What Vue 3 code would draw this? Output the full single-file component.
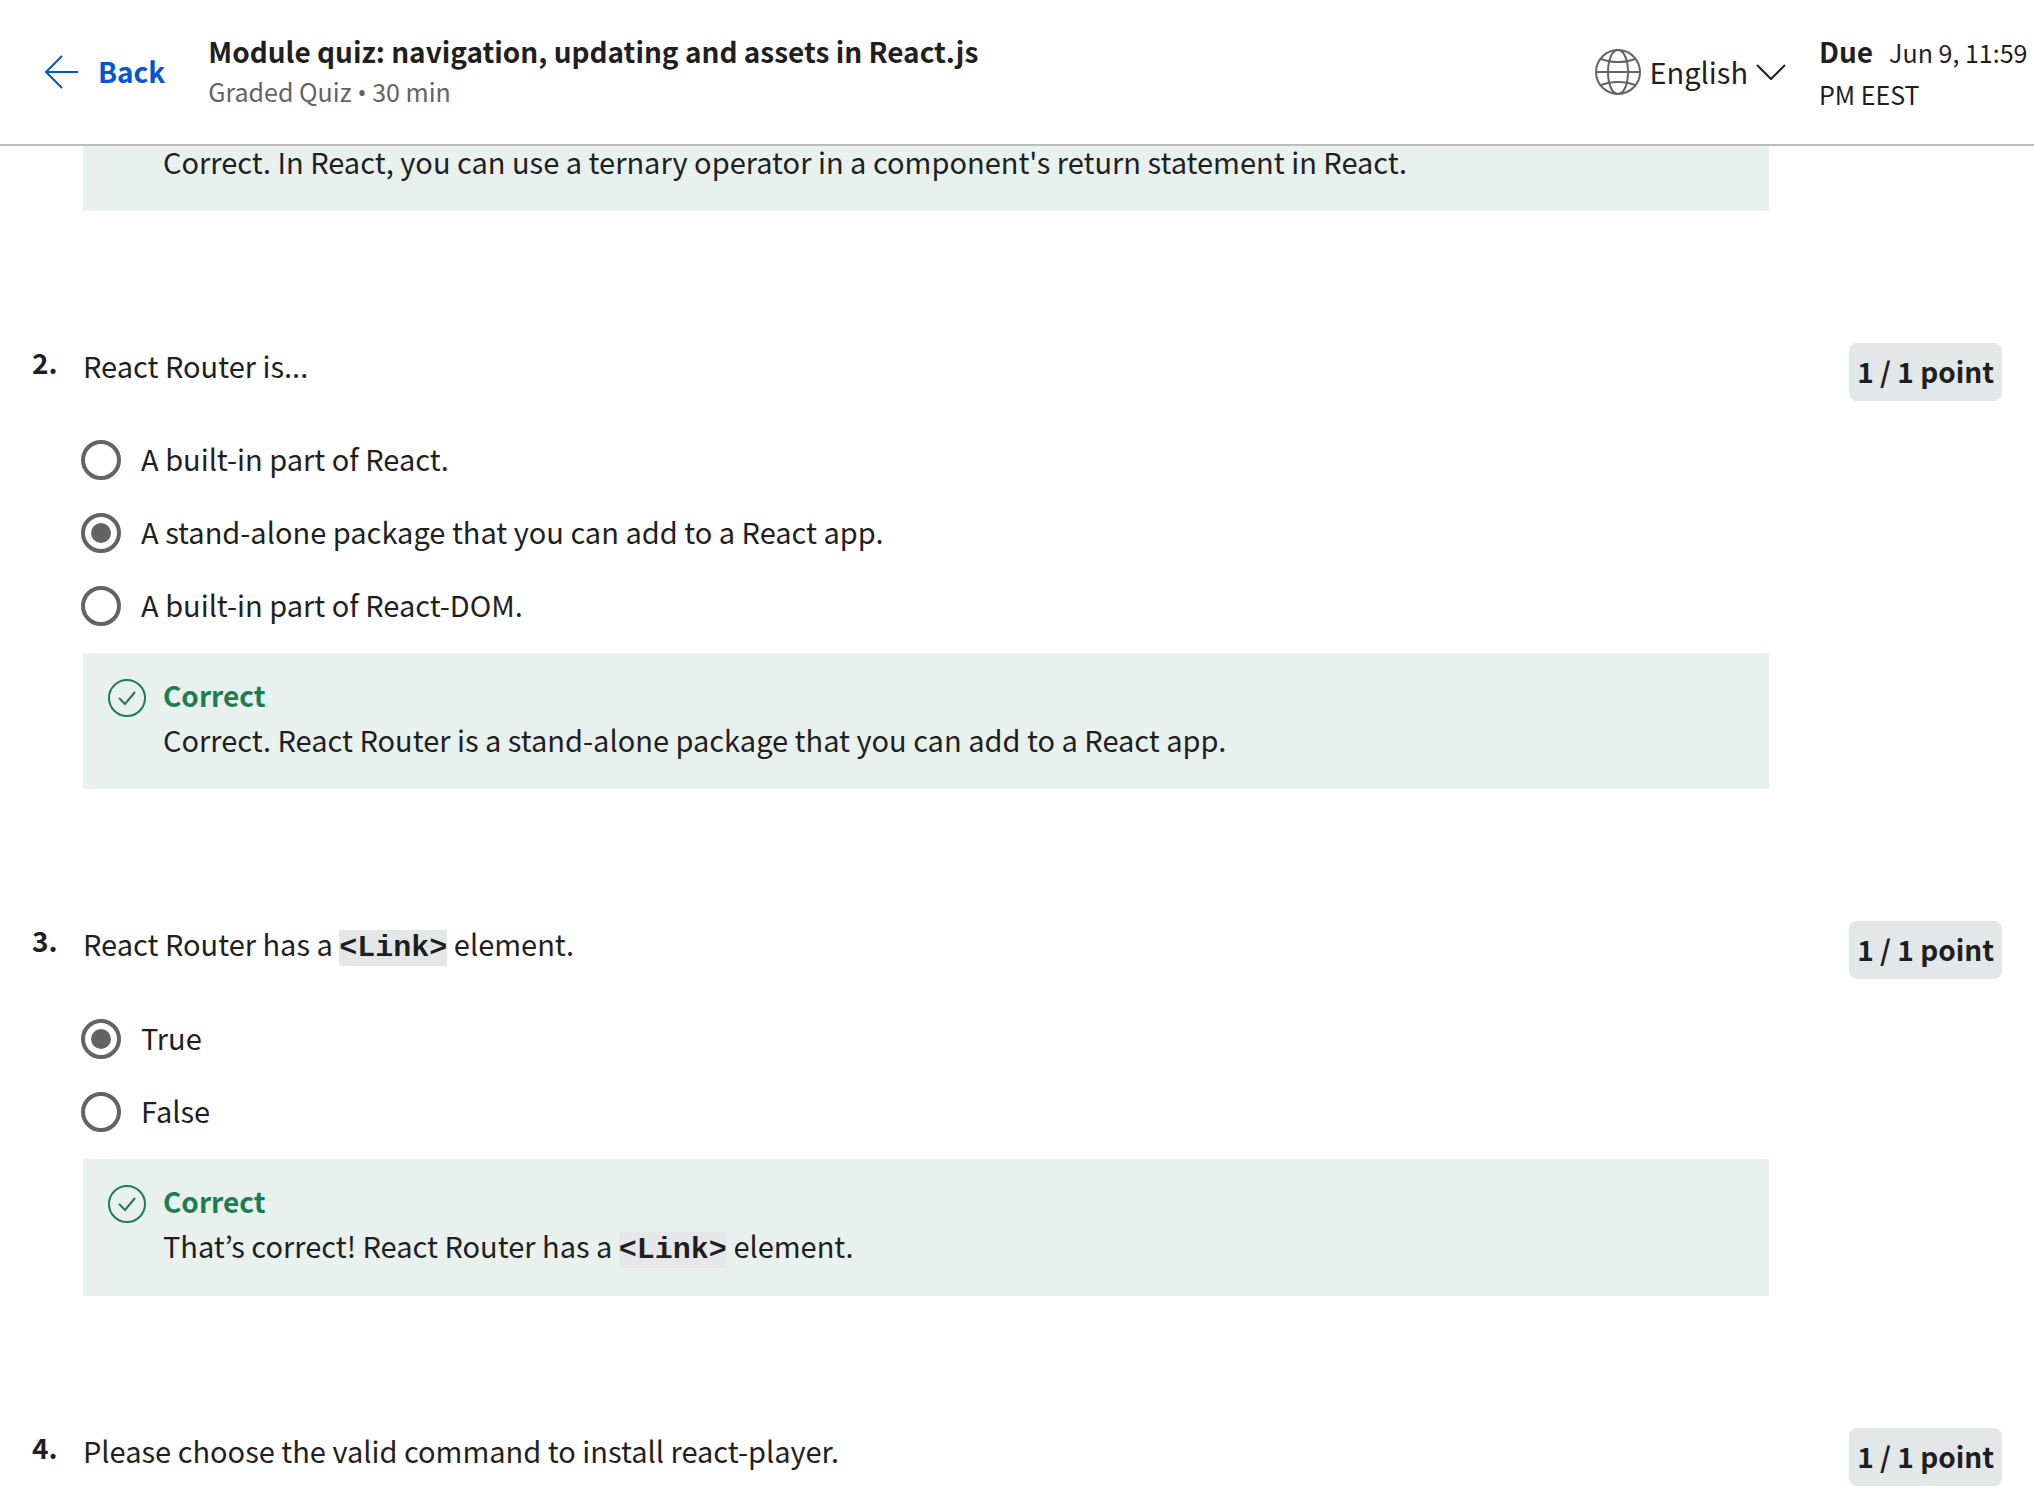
<script setup>
import { ref } from 'vue'

const questions = ref([
  {
    number: 2,
    text: [{ value: 'React Router is...' }],
    options: [
      'A built-in part of React.',
      'A stand-alone package that you can add to a React app.',
      'A built-in part of React-DOM.'
    ],
    selected: 1,
    feedback: [{ value: 'Correct. React Router is a stand-alone package that you can add to a React app.' }]
  },
  {
    number: 3,
    text: [{ value: 'React Router has a ' }, { value: '<Link>', code: true }, { value: ' element.' }],
    options: ['True', 'False'],
    selected: 0,
    feedback: [
      { value: 'That’s correct! React Router has a ' },
      { value: '<Link>', code: true },
      { value: ' element.' }
    ]
  },
  {
    number: 4,
    text: [{ value: 'Please choose the valid command to install react-player.' }],
    options: [],
    selected: null,
    feedback: null
  }
])
</script>

<template>
  <div class="page">
    <header class="topbar">
      <a class="back" href="#">
        <svg width="34" height="34" viewBox="0 0 34 34" fill="none" stroke="currentColor" stroke-width="2" aria-hidden="true">
          <path d="M34 17H2M18 1L2 17l16 16" />
        </svg>
        <span>Back</span>
      </a>
      <div class="heading">
        <h1>Module quiz: navigation, updating and assets in React.js</h1>
        <p>Graded Quiz <span class="dot">•</span> 30 min</p>
      </div>
      <button class="language" type="button">
        <svg width="46" height="46" viewBox="0 0 46 46" fill="none" stroke="#636363" stroke-width="2" aria-hidden="true">
          <circle cx="23" cy="23" r="22" />
          <path d="M1 23h44M23 1c-6 0-10 10-10 22s4 22 10 22 10-10 10-22S29 1 23 1zM6 10c5 2 11 3 17 3s12-1 17-3M6 36c5-2 11-3 17-3s12 1 17 3" />
        </svg>
        <span>English</span>
        <svg width="30" height="16" viewBox="0 0 30 16" fill="none" stroke="currentColor" stroke-width="2" aria-hidden="true">
          <path d="M1 1l14 14L29 1" />
        </svg>
      </button>
      <p class="due"><strong>Due</strong><span>Jun 9, 11:59</span> <span>PM EEST</span></p>
    </header>

    <main>
      <section class="question previous">
        <div class="feedback">
          <p>Correct. In React, you can use a ternary operator in a component's return statement in React.</p>
        </div>
      </section>

      <section v-for="q in questions" :key="q.number" class="question">
        <h2 class="number">{{ q.number }}.</h2>
        <p :id="`q${q.number}`" class="prompt">
          <template v-for="(part, i) in q.text" :key="i"><code v-if="part.code">{{ part.value }}</code><template v-else>{{ part.value }}</template></template>
        </p>
        <span class="points">1 / 1 point</span>
        <div v-if="q.options.length" class="options" role="radiogroup" :aria-labelledby="`q${q.number}`">
          <label v-for="(option, i) in q.options" :key="i" class="option">
            <input v-model="q.selected" type="radio" :name="`question-${q.number}`" :value="i">
            <span>{{ option }}</span>
          </label>
        </div>
        <div v-if="q.feedback" class="feedback">
          <svg width="38" height="38" viewBox="0 0 38 38" fill="none" stroke="#1d7c50" stroke-width="2" aria-hidden="true">
            <circle cx="19" cy="19" r="18" />
            <path d="M11 19l6 6 10-12" />
          </svg>
          <h3>Correct</h3>
          <p>
            <template v-for="(part, i) in q.feedback" :key="i"><code v-if="part.code">{{ part.value }}</code><template v-else>{{ part.value }}</template></template>
          </p>
        </div>
      </section>
    </main>
  </div>
</template>

<style>
body {
  margin: 0;
  background: #fff;
}
</style>

<style scoped>
.page {
  font-family: "Noto Sans CJK KR", "Open Sans", sans-serif;
  font-size: 29px;
  line-height: 44px;
  color: #1f1f1f;
}

h1,
h2,
h3,
p {
  margin: 0;
  font-size: inherit;
}

h1,
h2,
h3,
.back,
.points,
.due strong {
  font-size: 28px;
  font-weight: 600;
}

.topbar {
  position: sticky;
  top: 0;
  z-index: 1;
  box-sizing: border-box;
  display: flex;
  align-items: center;
  height: 146px;
  padding-left: 44px;
  border-bottom: 2px solid #bdbdbd;
  background: #fff;
}

.back {
  display: flex;
  align-items: center;
  gap: 20px;
  margin-right: 43px;
  color: #0056d2;
  text-decoration: none;
}

.back span,
.language span,
.heading {
  padding-bottom: 2px;
}

.heading {
  flex: 1;
}

.heading h1 {
  line-height: 40px;
}

.heading p {
  font-size: 25px;
  line-height: 40px;
  color: #636363;
}

.dot {
  font-family: "Open Sans", sans-serif;
  line-height: 1;
}

.language {
  display: flex;
  align-items: center;
  gap: 8px;
  margin-right: 33px;
  padding: 0;
  border: 0;
  background: none;
  color: inherit;
  font: inherit;
}

.due {
  width: 215px;
  font-size: 25px;
  line-height: 42px;
}

.due strong {
  margin-right: 16px;
}

main {
  padding: 0 32px 28px;
}

.question {
  display: grid;
  grid-template-columns: 51px 1fr 233px;
  margin-bottom: 132px;
}

.question:last-child {
  margin-bottom: 0;
}

.number {
  line-height: 38px;
}

.prompt {
  grid-column: 2;
}

.points {
  justify-self: end;
  box-sizing: border-box;
  height: 58px;
  margin-bottom: -14px;
  padding: 0 8px;
  border-radius: 8px;
  background: #e3e7e8;
  line-height: 56px;
}

.options {
  grid-column: 2;
  display: flex;
  flex-direction: column;
  gap: 33px;
  margin: 53px 0 27px -2px;
}

.option {
  display: flex;
  gap: 20px;
  line-height: 36px;
}

.option input {
  appearance: none;
  box-sizing: border-box;
  width: 40px;
  height: 40px;
  margin: 0;
  border: 4px solid #636363;
  border-radius: 50%;
}

.option input:checked {
  padding: 6px;
  background: #636363 content-box;
}

.feedback {
  grid-column: 2;
  display: grid;
  grid-template-columns: 55px 1fr;
  align-items: end;
  padding: 20px 25px 28px;
  background: #e8f1ee;
}

.feedback h3 {
  color: #1d7c50;
}

.feedback p {
  grid-column: 2;
}

/* The tail of the first answer slides under the sticky header. */
.previous {
  margin-top: -7px;
}

.previous .feedback {
  padding-top: 0;
}

code {
  padding: 1px 0;
  background: #e3e7e8;
  font-family: "Liberation Mono", monospace;
  font-size: 30px;
  font-weight: 700;
  line-height: 36px;
}

.feedback code {
  background: #e5e7e8;
}
</style>
